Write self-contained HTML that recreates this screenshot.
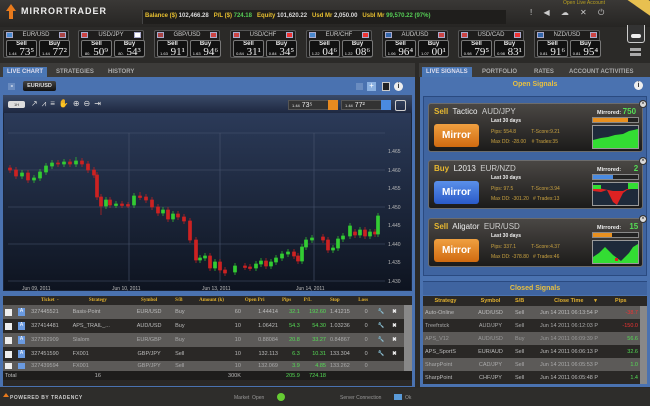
<!DOCTYPE html>
<html><head><meta charset="utf-8"><style>
*{margin:0;padding:0;box-sizing:border-box}
body{width:650px;height:406px;background:#2b2a28;font-family:"Liberation Sans",sans-serif;position:relative;overflow:hidden;color:#ddd}
.a{position:absolute}
.tk{position:absolute;top:30px;width:66px;height:28px;background:#1e1d1c;border:1px solid #555;border-radius:2px}
.tk .h{position:absolute;top:1px;left:0;width:100%;text-align:center;font-size:6px;color:#ccc;line-height:7px}
.tk .f1,.tk .f2{position:absolute;top:1px;width:7px;height:6px;background:#c44;border:1px solid #aac}
.tk .f1{left:2px;background:#4a8ad0}.tk .f2{right:2px}
.tk .b{position:absolute;top:9px;width:31px;height:17px;border:1px solid #777;background:#111;border-radius:2px;text-align:center;color:#eee;overflow:hidden}
.tk .b .l{display:block;font-size:6px;font-weight:bold;line-height:6px;color:#eee}
.tk .b .v{display:block;font-family:"Liberation Serif",serif;font-size:11px;line-height:10px;color:#eee;white-space:nowrap}
.tk .b .v small{font-family:"Liberation Sans",sans-serif;font-size:4px}
.tab{position:absolute;top:67px;height:10px;font-size:6px;font-weight:bold;color:#aaa;line-height:10px;padding:0 4px}
.tab.on{background:#4a76b4;color:#dde}
.blue{background:#4a72b0}
table{border-collapse:collapse;font-size:5.5px}
td{padding:0 2px;white-space:nowrap;overflow:hidden}
.card{position:absolute;left:428px;width:215px;height:49px;border:1px solid #6c6c6c;border-radius:3px;background:linear-gradient(#4a4744,#1c1b1a)}
.card .mb{position:absolute;left:5px;top:20px;width:45px;height:23px;border-radius:3px;font-size:10px;font-weight:bold;color:#fff;text-align:center;line-height:23px}
.card .t{position:absolute;left:5px;top:3px;font-size:8px;color:#eee}
.card .t b{color:#e8b830}
.card .s{position:absolute;left:62px;font-size:5px;color:#c9a240}
.card .m{position:absolute;left:168px;top:3px;font-size:5.5px;font-weight:bold;color:#eee}
.card .bar{position:absolute;left:163px;top:13px;width:47px;height:6px;border:1px solid #888;background:#222}
.card .gr{position:absolute;left:163px;top:21px;width:47px;height:24px;border:1px solid #999;background:#1e2a3a}
.x{position:absolute;left:210px;top:-4px;width:8px;height:8px;border-radius:50%;background:#ddd;border:1px solid #333;font-size:6px;color:#222;text-align:center;line-height:6px}
</style></head><body>
<div class="a" style="left:0;top:0;width:650px;height:27px;background:linear-gradient(#3a3836,#262523)"></div>
<div class="a" style="left:6px;top:4px;width:0;height:0;border-left:5px solid transparent;border-right:5px solid transparent;border-bottom:7px solid #e87a1c"></div>
<div class="a" style="left:9px;top:10px;width:4px;height:9px;background:#e87a1c"></div>
<div class="a" style="left:21px;top:6px;font-size:9px;font-weight:bold;color:#eee;letter-spacing:1px">MIRRORTRADER</div>
<div class="a" style="left:142px;top:10px;width:364px;height:14px;background:#1f1e1c;border-left:1px solid #444"></div>
<div class="a" style="left:145px;top:13px;font-size:6px;font-weight:bold;white-space:nowrap;color:#d8d8d8"><span style="color:#e8c030">Balance ($)</span> 102,466.28 &nbsp; <span style="color:#e8c030">P/L ($)</span> <span style="color:#5c5">724.18</span> &nbsp; <span style="color:#e8c030">Equity</span> 101,620.22 &nbsp; <span style="color:#e8c030">Usd Mr</span> 2,050.00 &nbsp; <span style="color:#e8c030">Usbl Mr</span> <span style="color:#5c5">99,570.22 (97%)</span></div>
<div class="a" style="left:563px;top:0;font-size:5px;color:#b8a020">Open Live Account</div>
<div class="a" style="left:530px;top:8px;font-size:8px;color:#ccc;word-spacing:9px">! ◀ ☁ ✕ ⏻</div>
<div class="a" style="left:618px;top:-6px;width:40px;height:12px;background:#e8c050;transform:rotate(35deg)"></div>
<div class="tk" style="left:3px"><div class="f1"></div><div class="f2" style="background:#a44"></div><div class="h">EUR/USD</div><div class="b" style="left:2px"><span class="l">Sell</span><span class="v"><small>1.44</small> 73⁵</span></div><div class="b" style="left:35px"><span class="l">Buy</span><span class="v"><small>1.44</small> 77²</span></div></div>
<div class="tk" style="left:78px"><div class="f1" style="background:#c44"></div><div class="f2" style="background:#fff"></div><div class="h">USD/JPY</div><div class="b" style="left:2px"><span class="l">Sell</span><span class="v"><small>80.</small> 50⁹</span></div><div class="b" style="left:35px"><span class="l">Buy</span><span class="v"><small>80.</small> 54³</span></div></div>
<div class="tk" style="left:154px"><div class="f1" style="background:#a44"></div><div class="f2"></div><div class="h">GBP/USD</div><div class="b" style="left:2px"><span class="l">Sell</span><span class="v"><small>1.63</small> 91¹</span></div><div class="b" style="left:35px"><span class="l">Buy</span><span class="v"><small>1.63</small> 94⁶</span></div></div>
<div class="tk" style="left:230px"><div class="f1" style="background:#c44"></div><div class="f2" style="background:#e33"></div><div class="h">USD/CHF</div><div class="b" style="left:2px"><span class="l">Sell</span><span class="v"><small>0.84</small> 31¹</span></div><div class="b" style="left:35px"><span class="l">Buy</span><span class="v"><small>0.84</small> 34⁵</span></div></div>
<div class="tk" style="left:306px"><div class="f1"></div><div class="f2" style="background:#e33"></div><div class="h">EUR/CHF</div><div class="b" style="left:2px"><span class="l">Sell</span><span class="v"><small>1.22</small> 04⁶</span></div><div class="b" style="left:35px"><span class="l">Buy</span><span class="v"><small>1.22</small> 08⁶</span></div></div>
<div class="tk" style="left:382px"><div class="f1" style="background:#36a"></div><div class="f2"></div><div class="h">AUD/USD</div><div class="b" style="left:2px"><span class="l">Sell</span><span class="v"><small>1.06</small> 96⁴</span></div><div class="b" style="left:35px"><span class="l">Buy</span><span class="v"><small>1.07</small> 00¹</span></div></div>
<div class="tk" style="left:458px"><div class="f1" style="background:#c44"></div><div class="f2" style="background:#e33"></div><div class="h">USD/CAD</div><div class="b" style="left:2px"><span class="l">Sell</span><span class="v"><small>0.98</small> 79⁵</span></div><div class="b" style="left:35px"><span class="l">Buy</span><span class="v"><small>0.98</small> 83¹</span></div></div>
<div class="tk" style="left:534px"><div class="f1" style="background:#36a"></div><div class="f2"></div><div class="h">NZD/USD</div><div class="b" style="left:2px"><span class="l">Sell</span><span class="v"><small>0.81</small> 91⁶</span></div><div class="b" style="left:35px"><span class="l">Buy</span><span class="v"><small>0.81</small> 95⁴</span></div></div>
<div class="a" style="left:627px;top:25px;width:18px;height:18px;border:1px solid #ccc;border-top:none;border-radius:0 0 3px 3px;background:#333"></div>
<div class="a" style="left:631px;top:34px;width:10px;height:4px;background:#eee;border-radius:2px"></div>
<div class="a" style="left:630px;top:48px;width:11px;height:8px;border:1px solid #aaa;border-width:2px 0;background:repeating-linear-gradient(#aaa 0 1px,transparent 1px 3px)"></div>
<div class="a" style="left:0;top:63px;width:650px;height:14px;background:#3c3b39"></div>
<div class="a" style="left:415px;top:63px;width:4px;height:343px;background:#2b2a28"></div>
<div class="tab on" style="left:3px">LIVE CHART</div>
<div class="tab" style="left:52px">STRATEGIES</div>
<div class="tab" style="left:104px">HISTORY</div>
<div class="tab on" style="left:422px">LIVE SIGNALS</div>
<div class="tab" style="left:478px">PORTFOLIO</div>
<div class="tab" style="left:530px">RATES</div>
<div class="tab" style="left:565px">ACCOUNT ACTIVITIES</div>
<div class="a blue" style="left:0;top:77px;width:415px;height:310px"></div>
<div class="a" style="left:8px;top:83px;width:7px;height:7px;background:#6a8cc0;font-size:4px;color:#fff;text-align:center">◂</div>
<div class="a" style="left:23px;top:81px;width:33px;height:10px;background:linear-gradient(#444,#111);border-radius:2px;font-size:5.5px;font-weight:bold;color:#ddd;text-align:center;line-height:10px">EUR/USD</div>
<div class="a" style="left:356px;top:83px;width:7px;height:7px;background:#6a8cc0"></div>
<div class="a" style="left:367px;top:82px;width:9px;height:9px;background:#8ab0e0;color:#fff;font-size:8px;line-height:8px;text-align:center">+</div>
<div class="a" style="left:382px;top:82px;width:8px;height:9px;background:#222;border:1px solid #ccc"></div>
<div class="a" style="left:394px;top:82px;width:9px;height:9px;border-radius:50%;background:#eee;color:#333;font-size:7px;line-height:9px;text-align:center;font-weight:bold">i</div>
<div class="a" style="left:3px;top:95px;width:409px;height:196px;background:linear-gradient(#2e3e5e,#0e1420);border:1px solid #1a2438"></div>
<div class="a" style="left:3px;top:95px;width:409px;height:18px;background:linear-gradient(#3a4a68,#1e2840)"></div>
<div class="a" style="left:8px;top:101px;width:17px;height:7px;background:#ddd;border-radius:2px;font-size:4px;color:#333;text-align:center;line-height:7px">1H</div>
<div class="a" style="left:31px;top:99px;font-size:8px;color:#ddd;letter-spacing:4px">↗⩘≡✋⊕⊖⇥</div>
<div class="a" style="left:288px;top:100px;width:50px;height:10px;background:#333;border:1px solid #555;font-size:7px;color:#eee;line-height:9px;padding-left:3px"><span style="font-size:4px">1.44</span> 73⁵</div>
<div class="a" style="left:328px;top:100px;width:10px;height:10px;background:#e88a20"></div>
<div class="a" style="left:341px;top:100px;width:50px;height:10px;background:#333;border:1px solid #555;font-size:7px;color:#eee;line-height:9px;padding-left:3px"><span style="font-size:4px">1.44</span> 77²</div>
<div class="a" style="left:381px;top:100px;width:10px;height:10px;background:#4a8ae0"></div>
<div class="a" style="left:395px;top:100px;width:11px;height:11px;border:1px solid #ccc;border-radius:2px"></div>
<svg class="a" style="left:0;top:0" width="415" height="300">
<g stroke="#4a5670" stroke-width="0.6">
<line x1="8" y1="133" x2="385" y2="133"/><line x1="8" y1="170" x2="385" y2="170"/><line x1="8" y1="207" x2="385" y2="207"/><line x1="8" y1="244" x2="385" y2="244"/><line x1="8" y1="281" x2="385" y2="281"/>
<line x1="129" y1="133" x2="129" y2="281"/><line x1="220" y1="133" x2="220" y2="281"/><line x1="314" y1="133" x2="314" y2="281"/>
</g>
<g font-size="5" fill="#bbb" font-family="Liberation Sans">
<text x="388" y="153">1.465</text><text x="388" y="172">1.460</text><text x="388" y="190">1.455</text><text x="388" y="209">1.450</text><text x="388" y="227">1.445</text><text x="388" y="246">1.440</text><text x="388" y="264">1.435</text><text x="388" y="283">1.430</text>
<text x="22" y="290">Jun 09, 2011</text><text x="112" y="290">Jun 10, 2011</text><text x="202" y="290">Jun 13, 2011</text><text x="296" y="290">Jun 14, 2011</text>
</g>
<g stroke-width="0.7">
<g stroke="#c22" fill="#c22">
<line x1="10" y1="165" x2="10" y2="173"/><rect x="8.5" y="168" width="3" height="2"/>
<line x1="16" y1="167" x2="16" y2="179"/><rect x="14.5" y="170" width="3" height="6"/>
<line x1="28" y1="170" x2="28" y2="183"/><rect x="26.5" y="173" width="3" height="7"/>
<line x1="58" y1="160" x2="58" y2="167"/><rect x="56.5" y="163" width="3" height="1"/>
<line x1="70" y1="159" x2="70" y2="167"/><rect x="68.5" y="162" width="3" height="2"/>
<line x1="82" y1="158" x2="82" y2="167"/><rect x="80.5" y="161" width="3" height="3"/>
<line x1="88" y1="161" x2="88" y2="173"/><rect x="86.5" y="164" width="3" height="6"/>
<line x1="94" y1="167" x2="94" y2="178"/><rect x="92.5" y="170" width="3" height="5"/>
<line x1="97" y1="172" x2="97" y2="200"/><rect x="95.5" y="175" width="3" height="22"/>
<line x1="101" y1="194" x2="101" y2="215"/><rect x="99.5" y="197" width="3" height="9"/>
<line x1="110" y1="197" x2="110" y2="208"/><rect x="108.5" y="200" width="3" height="5"/>
<line x1="122" y1="201" x2="122" y2="208"/><rect x="120.5" y="204" width="3" height="1.5"/>
<line x1="128" y1="202" x2="128" y2="208"/><rect x="126.5" y="204.5" width="3" height="1.5"/>
<line x1="140" y1="192" x2="140" y2="200"/><rect x="138.5" y="196" width="3" height="1.5"/>
<line x1="146" y1="194" x2="146" y2="203"/><rect x="144.5" y="197" width="3" height="3"/>
<line x1="152" y1="197" x2="152" y2="210"/><rect x="150.5" y="200" width="3" height="7"/>
<line x1="158" y1="204" x2="158" y2="216"/><rect x="156.5" y="207" width="3" height="6"/>
<line x1="168" y1="207" x2="168" y2="222"/><rect x="166.5" y="210" width="3" height="9"/>
<line x1="178" y1="211" x2="178" y2="220"/><rect x="176.5" y="214" width="3" height="3"/>
<line x1="184" y1="214" x2="184" y2="224"/><rect x="182.5" y="217" width="3" height="4"/>
<line x1="190" y1="218" x2="190" y2="243"/><rect x="188.5" y="221" width="3" height="19"/>
<line x1="196" y1="237" x2="196" y2="263"/><rect x="194.5" y="240" width="3" height="20"/>
<line x1="210" y1="253" x2="210" y2="271"/><rect x="208.5" y="256" width="3" height="12"/>
<line x1="220" y1="259" x2="220" y2="273"/><rect x="218.5" y="262" width="3" height="8"/>
<line x1="225" y1="267" x2="225" y2="276"/><rect x="223.5" y="270" width="3" height="3"/>
<line x1="245" y1="263" x2="245" y2="270"/><rect x="243.5" y="266" width="3" height="1.5"/>
<line x1="250" y1="264" x2="250" y2="271"/><rect x="248.5" y="267" width="3" height="1.5"/>
<line x1="266" y1="258" x2="266" y2="269"/><rect x="264.5" y="261" width="3" height="5"/>
<line x1="294" y1="249" x2="294" y2="259"/><rect x="292.5" y="252" width="3" height="4"/>
<line x1="298" y1="253" x2="298" y2="264"/><rect x="296.5" y="256" width="3" height="5"/>
<line x1="323" y1="234" x2="323" y2="243"/><rect x="321.5" y="237" width="3" height="3"/>
<line x1="328" y1="237" x2="328" y2="253"/><rect x="326.5" y="240" width="3" height="10"/>
<line x1="355" y1="229" x2="355" y2="238"/><rect x="353.5" y="232" width="3" height="3"/>
<line x1="365" y1="227" x2="365" y2="239"/><rect x="363.5" y="230" width="3" height="6"/>
<line x1="375" y1="229" x2="375" y2="237"/><rect x="373.5" y="232" width="3" height="2"/>
</g>
<g stroke="#3c3" fill="#3c3">
<line x1="22" y1="170" x2="22" y2="179"/><rect x="20.5" y="173" width="3" height="3"/>
<line x1="34" y1="175" x2="34" y2="183"/><rect x="32.5" y="178" width="3" height="2"/>
<line x1="40" y1="169" x2="40" y2="181"/><rect x="38.5" y="172" width="3" height="6"/>
<line x1="46" y1="163" x2="46" y2="175"/><rect x="44.5" y="166" width="3" height="6"/>
<line x1="52" y1="160" x2="52" y2="169"/><rect x="50.5" y="163" width="3" height="3"/>
<line x1="64" y1="159" x2="64" y2="167"/><rect x="62.5" y="162" width="3" height="2"/>
<line x1="76" y1="157" x2="76" y2="167"/><rect x="74.5" y="161" width="3" height="3"/>
<line x1="106" y1="197" x2="106" y2="209"/><rect x="104.5" y="200" width="3" height="6"/>
<line x1="116" y1="201" x2="116" y2="208"/><rect x="114.5" y="204" width="3" height="1.5"/>
<line x1="134" y1="193" x2="134" y2="208"/><rect x="132.5" y="196" width="3" height="9"/>
<line x1="163" y1="207" x2="163" y2="216"/><rect x="161.5" y="210" width="3" height="3"/>
<line x1="173" y1="211" x2="173" y2="222"/><rect x="171.5" y="214" width="3" height="5"/>
<line x1="200" y1="255" x2="200" y2="263"/><rect x="198.5" y="258" width="3" height="2"/>
<line x1="205" y1="253" x2="205" y2="261"/><rect x="203.5" y="256" width="3" height="2"/>
<line x1="215" y1="259" x2="215" y2="271"/><rect x="213.5" y="262" width="3" height="6"/>
<line x1="235" y1="263" x2="235" y2="275"/><rect x="233.5" y="266" width="3" height="6"/>
<line x1="256" y1="261" x2="256" y2="271"/><rect x="254.5" y="264" width="3" height="4"/>
<line x1="261" y1="258" x2="261" y2="267"/><rect x="259.5" y="261" width="3" height="3"/>
<line x1="271" y1="259" x2="271" y2="269"/><rect x="269.5" y="262" width="3" height="4"/>
<line x1="276" y1="255" x2="276" y2="265"/><rect x="274.5" y="258" width="3" height="4"/>
<line x1="282" y1="251" x2="282" y2="261"/><rect x="280.5" y="254" width="3" height="4"/>
<line x1="288" y1="249" x2="288" y2="257"/><rect x="286.5" y="252" width="3" height="2"/>
<line x1="302" y1="244" x2="302" y2="264"/><rect x="300.5" y="247" width="3" height="14"/>
<line x1="306" y1="237" x2="306" y2="250"/><rect x="304.5" y="240" width="3" height="7"/>
<line x1="312" y1="235" x2="312" y2="243"/><rect x="310.5" y="238" width="3" height="2"/>
<line x1="333" y1="245" x2="333" y2="253"/><rect x="331.5" y="248" width="3" height="2"/>
<line x1="338" y1="236" x2="338" y2="251"/><rect x="336.5" y="239" width="3" height="9"/>
<line x1="343" y1="233" x2="343" y2="242"/><rect x="341.5" y="236" width="3" height="3"/>
<line x1="350" y1="223" x2="350" y2="239"/><rect x="348.5" y="226" width="3" height="10"/>
<line x1="360" y1="227" x2="360" y2="238"/><rect x="358.5" y="230" width="3" height="5"/>
<line x1="370" y1="229" x2="370" y2="239"/><rect x="368.5" y="232" width="3" height="4"/>
<line x1="378" y1="213" x2="378" y2="237"/><rect x="376.5" y="216" width="3" height="18"/>
</g>
</g>
</svg>
<div class="a" style="left:3px;top:296px;width:409px;height:90px;background:#2a2826"></div>
<table class="a" style="left:3px;top:296px;width:409px;table-layout:fixed">
<colgroup><col style="width:12px"><col style="width:12px"><col style="width:38px"><col style="width:50px"><col style="width:44px"><col style="width:22px"><col style="width:42px"><col style="width:34px"><col style="width:20px"><col style="width:24px"><col style="width:26px"><col style="width:18px"><col style="width:13px"><col style="width:13px"><col style="width:7px"></colgroup>
<tr style="height:9px;color:#e0b030;font-family:'Liberation Serif',serif;font-weight:bold;font-size:5px"><td></td><td></td><td style="text-align:center">Ticket&nbsp; -</td><td style="text-align:center">Strategy</td><td style="text-align:center">Symbol</td><td>S/B</td><td>Amount (k)</td><td>Open Pri</td><td>Pips</td><td>P/L</td><td>Stop</td><td>Loss</td><td></td><td></td><td></td></tr>
<tr style="height:14px;background:#5c5a58;color:#bbb"><td><div style="width:7px;height:7px;background:#eee"></div></td><td><div style="width:7px;height:8px;background:#6a9ae0;color:#fff;font-size:5px;text-align:center">A</div></td><td>327445521</td><td>Basis-Point</td><td style="text-align:center">EUR/USD</td><td>Buy</td><td style="text-align:right">60</td><td style="text-align:right">1.44414</td><td style="text-align:right;color:#5d5">32.1</td><td style="text-align:right;color:#5d5">192.60</td><td>1.41215</td><td style="text-align:center">0</td><td style="color:#eee">🔧</td><td style="color:#eee;font-weight:bold">✖</td><td style="background:#888"></td></tr>
<tr style="height:14px;background:#2a2826;color:#bbb"><td><div style="width:7px;height:7px;background:#eee"></div></td><td><div style="width:7px;height:8px;background:#6a9ae0;color:#fff;font-size:5px;text-align:center">A</div></td><td>327414481</td><td>APS_TRAIL_...</td><td style="text-align:center">AUD/USD</td><td>Buy</td><td style="text-align:right">10</td><td style="text-align:right">1.06421</td><td style="text-align:right;color:#5d5">54.3</td><td style="text-align:right;color:#5d5">54.30</td><td>1.03236</td><td style="text-align:center">0</td><td style="color:#eee">🔧</td><td style="color:#eee;font-weight:bold">✖</td><td style="background:#888"></td></tr>
<tr style="height:14px;background:#5c5a58;color:#aaa"><td><div style="width:7px;height:7px;background:#eee"></div></td><td><div style="width:7px;height:8px;background:#6a9ae0;color:#fff;font-size:5px;text-align:center">A</div></td><td>327392909</td><td>Slalom</td><td style="text-align:center">EUR/GBP</td><td>Buy</td><td style="text-align:right">10</td><td style="text-align:right">0.88084</td><td style="text-align:right;color:#5d5">20.8</td><td style="text-align:right;color:#5d5">33.27</td><td>0.84867</td><td style="text-align:center">0</td><td style="color:#eee">🔧</td><td style="color:#eee;font-weight:bold">✖</td><td style="background:#888"></td></tr>
<tr style="height:14px;background:#2a2826;color:#bbb"><td><div style="width:7px;height:7px;background:#eee"></div></td><td><div style="width:7px;height:8px;background:#6a9ae0;color:#fff;font-size:5px;text-align:center">A</div></td><td>327451590</td><td>FX001</td><td style="text-align:center">GBP/JPY</td><td>Sell</td><td style="text-align:right">10</td><td style="text-align:right">132.113</td><td style="text-align:right;color:#5d5">6.3</td><td style="text-align:right;color:#5d5">10.31</td><td>133.304</td><td style="text-align:center">0</td><td style="color:#eee">🔧</td><td style="color:#eee;font-weight:bold">✖</td><td style="background:#888"></td></tr>
<tr style="height:10px;background:#5c5a58;color:#aaa"><td><div style="width:7px;height:6px;background:#eee"></div></td><td><div style="width:7px;height:6px;background:#6a9ae0"></div></td><td>327439594</td><td>FX001</td><td style="text-align:center">GBP/JPY</td><td>Sell</td><td style="text-align:right">10</td><td style="text-align:right">132.069</td><td style="text-align:right;color:#5d5">3.9</td><td style="text-align:right;color:#5d5">4.85</td><td>133.262</td><td style="text-align:center">0</td><td></td><td></td><td style="background:#888"></td></tr>
<tr style="height:9px;background:#1e1d1c;color:#bbb"><td colspan="2">Total</td><td></td><td style="text-align:center">16</td><td></td><td></td><td style="text-align:right">300K</td><td></td><td style="text-align:right;color:#5d5">205.9</td><td style="text-align:right;color:#5d5">724.18</td><td></td><td></td><td></td><td></td><td></td></tr>
</table>
<div class="a" style="left:0;top:388px;width:650px;height:18px;background:#2e2d2b"></div>
<div class="a" style="left:3px;top:393px;width:0;height:0;border-left:3px solid transparent;border-right:3px solid transparent;border-bottom:4px solid #e87a1c"></div>
<div class="a" style="left:10px;top:395px;font-size:5px;font-weight:bold;color:#ccc;letter-spacing:0.5px">POWERED BY TRADENCY</div>
<div class="a" style="left:234px;top:395px;font-size:5px;color:#999">Market&nbsp; Open</div>
<div class="a" style="left:277px;top:393px;width:8px;height:8px;border-radius:50%;background:#6c3"></div>
<div class="a" style="left:340px;top:395px;font-size:5px;color:#999">Server Connection</div>
<div class="a" style="left:394px;top:394px;width:8px;height:6px;background:#5a9ad8"></div>
<div class="a" style="left:405px;top:395px;font-size:5px;color:#999">Ok</div>
<div class="a blue" style="left:420px;top:77px;width:230px;height:310px"></div>
<div class="a" style="left:420px;top:81px;width:230px;text-align:center;font-size:7px;font-weight:bold;color:#e8c040">Open Signals</div>
<div class="a" style="left:634px;top:81px;width:9px;height:9px;border-radius:50%;background:#eee;color:#333;font-size:7px;line-height:9px;text-align:center;font-weight:bold">i</div>
<div class="a" style="left:423px;top:96px;width:224px;height:180px;background:#3f64a0;border:1px solid #2a4a80"></div>
<div class="card" style="top:103px"><div class="x">×</div><div class="t"><b>Sell</b>&nbsp; Tactico &nbsp;<span style="color:#ccc">AUD/JPY</span></div><div class="mb" style="background:linear-gradient(#f0a040,#d06a10)">Mirror</div><div class="s" style="top:14px;color:#eee;font-weight:bold">Last 30 days</div><div class="s" style="top:25px">Pips: 554.8 &nbsp;&nbsp;&nbsp;&nbsp;&nbsp;&nbsp;&nbsp;&nbsp;&nbsp; T-Score:9.21</div><div class="s" style="top:35px">Max DD: -28.00 &nbsp;&nbsp; # Trades:35</div><div class="m">Mirrored: <span style="color:#5d5;font-size:8px">750</span></div><div class="bar"><div style="width:78%;height:100%;background:#e89020"></div></div><div class="gr"><svg width="45" height="22"><polygon points="0,22 0,14 8,12 15,11 22,9 30,8 36,5 45,3 45,22" fill="#3d3"/></svg></div></div>
<div class="card" style="top:160px"><div class="x">×</div><div class="t"><b>Buy</b>&nbsp; L2013 &nbsp;<span style="color:#ccc">EUR/NZD</span></div><div class="mb" style="background:linear-gradient(#5a90ea,#2a5ac8)">Mirror</div><div class="s" style="top:14px;color:#eee;font-weight:bold">Last 30 days</div><div class="s" style="top:25px">Pips: 97.5 &nbsp;&nbsp;&nbsp;&nbsp;&nbsp;&nbsp;&nbsp;&nbsp;&nbsp;&nbsp;&nbsp; T-Score:3.94</div><div class="s" style="top:35px">Max DD: -301.20 &nbsp; # Trades:13</div><div class="m">Mirrored: <span style="color:#5d5;font-size:8px">&nbsp;&nbsp;&nbsp;&nbsp;&nbsp;2</span></div><div class="bar"><div style="width:45%;height:100%;background:#4a8ae0"></div></div><div class="gr"><svg width="45" height="22"><polygon points="0,4 0,8 8,9 14,7 20,19 24,22 30,10 34,7 38,6 34,6 30,8 20,8" fill="#d22"/><polygon points="0,2 8,2 8,6 0,6" fill="#3d3"/><polygon points="35,0 45,0 45,6 35,6" fill="#3d3"/></svg></div></div>
<div class="card" style="top:218px"><div class="x">×</div><div class="t"><b>Sell</b>&nbsp; Aligator &nbsp;<span style="color:#ccc">EUR/USD</span></div><div class="mb" style="background:linear-gradient(#f0a040,#d06a10)">Mirror</div><div class="s" style="top:14px;color:#eee;font-weight:bold">Last 30 days</div><div class="s" style="top:25px">Pips: 337.1 &nbsp;&nbsp;&nbsp;&nbsp;&nbsp;&nbsp;&nbsp;&nbsp;&nbsp; T-Score:4.37</div><div class="s" style="top:35px">Max DD: -378.80 &nbsp; # Trades:46</div><div class="m">Mirrored: <span style="color:#5d5;font-size:8px">&nbsp;&nbsp;&nbsp;15</span></div><div class="bar"><div style="width:42%;height:100%;background:#e89020"></div></div><div class="gr"><svg width="45" height="22"><polygon points="0,22 0,16 6,12 12,6 16,10 20,14 24,17 28,20 32,16 36,12 40,6 45,3 45,22" fill="#3d3"/><rect x="22" y="17" width="3" height="3" fill="#d22"/></svg></div></div>
<div class="a" style="left:423px;top:281px;width:224px;height:14px;background:#3f64a0;border-top:1px solid #2a4a80;text-align:center;font-size:7px;font-weight:bold;color:#e8c040;line-height:14px">Closed Signals</div>
<table class="a" style="left:423px;top:296px;width:224px;table-layout:fixed;font-size:5.5px">
<colgroup><col style="width:45px"><col style="width:45px"><col style="width:25px"><col style="width:75px"><col style="width:27px"><col style="width:7px"></colgroup>
<tr style="height:10px;background:#2a2826;color:#e0b030;font-weight:bold"><td style="text-align:center">Strategy</td><td style="text-align:center">Symbol</td><td>S/B</td><td style="text-align:center">Close Time &nbsp;&nbsp;&nbsp;&nbsp;&nbsp;&nbsp;▾</td><td>Pips</td><td></td></tr>
<tr style="height:13px;background:#5c5a58;color:#bbb"><td>Auto-Online</td><td style="text-align:center">AUD/USD</td><td>Sell</td><td>Jun 14 2011 06:13:54 P</td><td style="text-align:right;color:#e33">-38.7</td><td style="background:#888"></td></tr>
<tr style="height:13px;background:#2a2826;color:#aaa"><td>Treefrstck</td><td style="text-align:center">AUD/JPY</td><td>Sell</td><td>Jun 14 2011 06:12:03 P</td><td style="text-align:right;color:#e33">-150.0</td><td style="background:#888"></td></tr>
<tr style="height:13px;background:#5c5a58;color:#999"><td>APS_V12</td><td style="text-align:center">AUD/USD</td><td>Buy</td><td>Jun 14 2011 06:09:39 P</td><td style="text-align:right;color:#5d5">56.6</td><td style="background:#888"></td></tr>
<tr style="height:13px;background:#2a2826;color:#bbb"><td>APS_SportS</td><td style="text-align:center">EUR/AUD</td><td>Sell</td><td>Jun 14 2011 06:06:13 P</td><td style="text-align:right;color:#5d5">32.6</td><td style="background:#888"></td></tr>
<tr style="height:13px;background:#5c5a58;color:#aaa"><td>SharpPoint</td><td style="text-align:center">CAD/JPY</td><td>Sell</td><td>Jun 14 2011 06:05:53 P</td><td style="text-align:right;color:#5d5">1.0</td><td style="background:#888"></td></tr>
<tr style="height:13px;background:#2a2826;color:#bbb"><td>SharpPoint</td><td style="text-align:center">CHF/JPY</td><td>Sell</td><td>Jun 14 2011 06:05:48 P</td><td style="text-align:right;color:#5d5">1.4</td><td style="background:#888"></td></tr>
</table>
</body></html>
